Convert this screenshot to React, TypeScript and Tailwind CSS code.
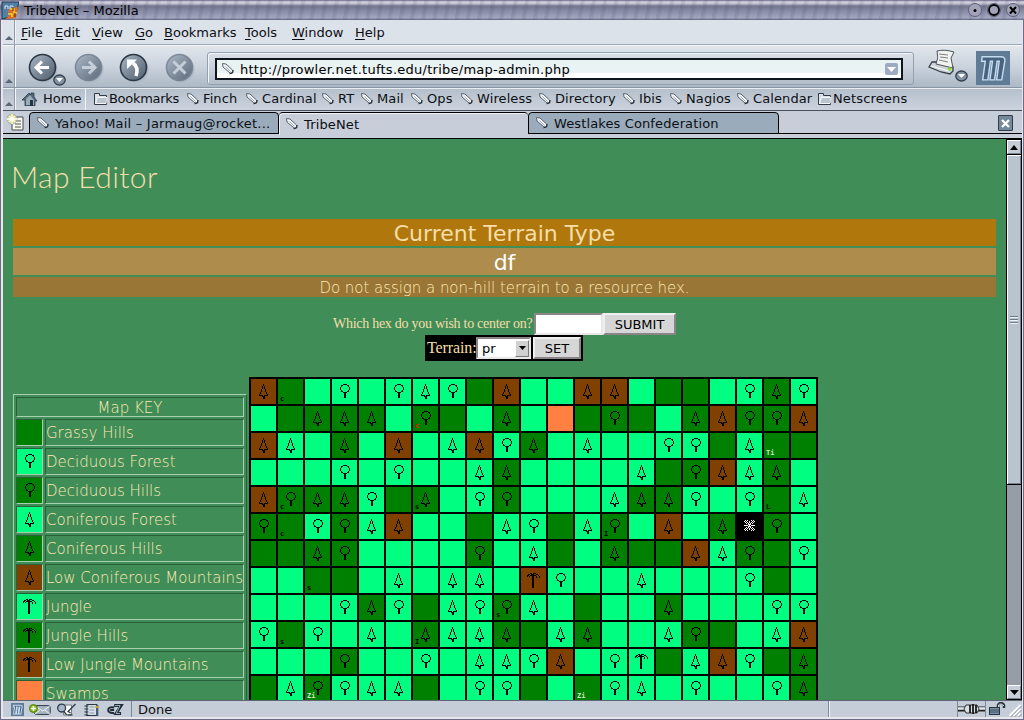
import React from "react";

const CONIFER = [
  "....#....",
  "....#....",
  "...#.#...",
  "...#.#...",
  "...#.#...",
  "..#...#..",
  "..#...#..",
  "..#...#..",
  ".#.....#.",
  ".#.....#.",
  "#.......#",
  "####.####",
  "...###...",
  "....##...",
  "....##...",
];
const ROUND = [
  "...####...",
  ".##....##.",
  ".#......#.",
  "#........#",
  "#........#",
  "#........#",
  ".#......#.",
  ".##....##.",
  "...####...",
  "....##....",
  "....##....",
  "....##....",
  "....##....",
  "....##....",
];
const PALM = [
  "...##.###....",
  ".##.###..##..",
  "##.######..#.",
  "#.#..##..#..#",
  ".....##..#..#",
  ".....##......",
  ".....##......",
  ".....##......",
  ".....##......",
  ".....##......",
  ".....##......",
  ".....##......",
  ".....##......",
  ".....##......",
  ".....##......",
];
const STAR = [
  ".#.#...#.#.",
  "#.#..#..#.#",
  ".#.#.#.#.#.",
  "..#.#.#.#..",
  "....###....",
  "####.#.####",
  "....###....",
  "..#.#.#.#..",
  ".#.#.#.#.#.",
  "#.#..#..#.#",
  ".#.#...#.#.",
];

function Pixels({ art, x, y, color = "#000" }: { art: string[]; x: number; y: number; color?: string }) {
  const d = art
    .map((row, j) => [...row].map((c, i) => (c === "#" ? `M${x + i} ${y + j}h1v1h-1z` : "")).join(""))
    .join("");
  return (
    <svg width="25" height="25" viewBox="0 0 25 25" shapeRendering="crispEdges" className="block">
      <path d={d} fill={color} />
    </svg>
  );
}

const BG: Record<string, string> = {
  h: "bg-[#008000]", p: "bg-[#00ff80]", f: "bg-[#00ff80]", d: "bg-[#008000]",
  c: "bg-[#00ff80]", C: "bg-[#008000]", m: "bg-[#804000]", j: "bg-[#00ff80]",
  k: "bg-[#008000]", J: "bg-[#804000]", s: "bg-[#ff8040]", o: "bg-black",
};

function Glyph({ t }: { t: string }) {
  if ("cCm".includes(t)) return <Pixels art={CONIFER} x={8} y={5} />;
  if ("fd".includes(t)) return <Pixels art={ROUND} x={8} y={5} />;
  if ("jkJ".includes(t)) return <Pixels art={PALM} x={6} y={5} />;
  if (t === "o") return <Pixels art={STAR} x={7} y={6} color="#fff" />;
  return null;
}

const ROWS = [
  "mhpfpfcfhmppmmphhpfCf",
  "phCCCpdhpCpshdhpCmddm",
  "mcpCpmpcmfCpcppffhchh",
  "pppfpfppcCppppchdmcCp",
  "mdCCfhCpfdpppcCCfpfhc",
  "dhfdcmpphcfhcdpmpCodp",
  "hhCdppppdpchpChhmcdhf",
  "pphhpcpccpJfppcpppfhp",
  "pppfCfhcfdcphppCpppff",
  "fhfpcpCccChcCppcdhpcm",
  "pppdppfpccfmpfjhcmfhC",
  "hcdfcchpffhphfcpfppfC",
];

const MARKS: Record<string, [string, string]> = {
  "0,1": ["c", "text-black"], "1,6": ["c", "text-[#ff0000]"], "2,19": ["Ti", "text-[#d0e8d0]"],
  "4,1": ["c", "text-black"], "4,6": ["s", "text-black"], "4,19": ["L", "text-black"],
  "5,1": ["c", "text-black"], "5,13": ["I", "text-black"], "7,2": ["s", "text-black"],
  "8,9": ["s", "text-black"], "9,1": ["s", "text-black"], "9,6": ["I", "text-black"],
  "11,2": ["Zi", "text-[#d0e8d0]"], "11,12": ["Zi", "text-[#d0e8d0]"],
};

function HexMap() {
  return (
    <div className="grid grid-cols-[repeat(21,25px)] auto-rows-[25px] gap-[2px] bg-black p-[2px] w-[569px]">
      {ROWS.flatMap((row, r) =>
        [...row].map((t, c) => {
          const m = MARKS[`${r},${c}`];
          return (
            <div key={`${r}-${c}`} className={`relative w-[25px] h-[25px] ${BG[t]}`}>
              <Glyph t={t} />
              {m && (
                <span className={`absolute left-[2px] bottom-px text-[7px] leading-[7px] font-bold font-['DejaVu_Sans_Mono',monospace] ${m[1]}`}>{m[0]}</span>
              )}
            </div>
          );
        })
      )}
    </div>
  );
}

const KEY: [string, string][] = [
  ["h", "Grassy Hills"], ["f", "Deciduous Forest"], ["d", "Deciduous Hills"], ["c", "Coniferous Forest"],
  ["C", "Coniferous Hills"], ["m", "Low Coniferous Mountains"], ["j", "Jungle"], ["k", "Jungle Hills"],
  ["J", "Low Jungle Mountains"], ["s", "Swamps"],
];

const INSET = "border border-t-[#28603a] border-l-[#28603a] border-r-[#a8d0b0] border-b-[#a8d0b0]";

function MapKey() {
  return (
    <div className="w-[234px] border border-t-[#a8d0b0] border-l-[#a8d0b0] border-r-[#28603a] border-b-[#28603a] p-[2px] flex flex-col gap-[2px] text-[15px] font-extralight text-[#ffe9b4] whitespace-nowrap">
      <div className={`h-[20px] w-[228px] text-center leading-[21px] ${INSET}`}>Map KEY</div>
      {KEY.map(([t, label]) => (
        <div key={label} className="flex gap-[2px]">
          <div className={`w-[27px] h-[27px] shrink-0 ${INSET} ${BG[t]}`}><Glyph t={t} /></div>
          <div className={`w-[199px] h-[27px] leading-[26px] ${INSET}`}>{label}</div>
        </div>
      ))}
    </div>
  );
}

function Tag() {
  return (
    <svg width="14" height="14" viewBox="0 0 14 14" className="shrink-0">
      <path d="M1.500 1.500L5 2 11.500 8 11.500 10.500 9 11 2 5z" fill="#f1f4f7" stroke="#59636f" />
      <path d="M4.500 4.500l5 5" fill="none" stroke="#a4adb6" />
      <path d="M8.500 11.800l3.200-.8.500-3" fill="none" stroke="#1c222a" />
    </svg>
  );
}

function Folder() {
  return (
    <svg width="15" height="14" viewBox="0 0 15 14" className="shrink-0">
      <path d="M1.500 12.500v-11h5v2h7v9z" fill="#dce2e8" stroke="#333c46" />
      <path d="M2.500 11.500l2-6h9.500l-1 6z" fill="#b9c4ce" stroke="#fff" strokeWidth=".8" />
    </svg>
  );
}

function Round({ children, dim }: { children: React.ReactNode; dim?: boolean }) {
  return (
    <svg width="30" height="30" viewBox="0 0 30 30" className="block shrink-0">
      <defs>
        <linearGradient id="ball" x1="0" y1="0" x2="1" y2="1">
          <stop offset="0" stopColor="#aab7c5" /><stop offset="1" stopColor="#4d5b6c" />
        </linearGradient>
      </defs>
      <circle cx="16" cy="16" r="13.5" fill="#a5b1bf" opacity=".6" />
      <circle cx="14.5" cy="14.5" r="13" fill="url(#ball)" stroke={dim ? "#6f7c8b" : "#2c3744"} strokeWidth="1.6" opacity={dim ? 0.85 : 1} />
      {children}
    </svg>
  );
}

function Drop() {
  return (
    <svg width="13" height="12" viewBox="0 0 13 12" className="block">
      <ellipse cx="6.5" cy="6" rx="5.7" ry="5" fill="#8391a1" stroke="#333f4c" strokeWidth="1.3" />
      <path d="M3 4h7L6.5 8z" fill="#fff" />
    </svg>
  );
}

function Grip() {
  return (
    <div className="w-[12px] shrink-0 border-r border-[#8f9ba9] flex items-end justify-center pb-[4px] shadow-[1px_0_0_#f3f6f9]">
      <svg width="8" height="4" viewBox="0 0 8 4"><path d="M0 4l4-4 4 4z" fill="#5c6875" /></svg>
    </div>
  );
}

const MENU: [string, string, string][] = [
  ["F", "ile", "w-[34px]"], ["E", "dit", "w-[37px]"], ["V", "iew", "w-[43px]"], ["G", "o", "w-[29px]"],
  ["B", "ookmarks", "w-[81px]"], ["T", "ools", "w-[47px]"], ["W", "indow", "w-[63px]"], ["H", "elp", "w-[40px]"],
];

const LINKS: [string, string, boolean][] = [
  ["Bookmarks", "w-[93px]", true], ["Finch", "w-[59px]", false], ["Cardinal", "w-[76px]", false],
  ["RT", "w-[39px]", false], ["Mail", "w-[50px]", false], ["Ops", "w-[50px]", false],
  ["Wireless", "w-[78px]", false], ["Directory", "w-[84px]", false], ["Ibis", "w-[47px]", false],
  ["Nagios", "w-[67px]", false], ["Calendar", "w-[81px]", false], ["Netscreens", "w-[110px]", true],
];

function MozM({ size }: { size: number }) {
  return (
    <svg width={size} height={size} viewBox="0 0 33 33" className="block shrink-0">
      <rect width="33" height="33" fill="#607b96" />
      <path d="M6 5.500h18q4.500 0 4 4L25 28h-5l2.500-18h-2L18 28h-4.500L16 10h-2l-2.500 18H6.500L9 10H5.500z" fill="#48637f" stroke="#c7dbef" strokeWidth={size < 20 ? 2.6 : 1.4} />
    </svg>
  );
}

function TitleBar() {
  return (
    <div className="h-[20px] shrink-0 flex items-center bg-[repeating-linear-gradient(100deg,rgba(60,62,90,0.12)_0_3px,transparent_5px_11px),linear-gradient(#69698a_0,#d7d7e5_2px,#b8b8ca_4px,#73768c_6px,#888ca5_11px,#a2a6c0_18px,#60617b_20px)]">
      <svg width="18" height="18" viewBox="0 0 18 18" className="ml-[1px]">
        <path d="M1 1h17L14 15 1 18z" fill="#537fa5" stroke="#23374d" />
        <path d="M4 5v3M4 5h3v3M9 5h3v3H9z" stroke="#d7e8f5" fill="none" />
        <path d="M7 9l4-2 6-1-2 11-10 1 3-4z" fill="#db6d22" />
        <path d="M9 8h4v4h3M7 13h4v3" stroke="#f5d431" strokeWidth="1.500" fill="none" />
        <path d="M12 6v4M14 12v4" stroke="#582712" />
      </svg>
      <span className="ml-[5px] mt-[1px] text-[13px] text-black leading-[20px] tracking-[0.06px]">TribeNet – Mozilla</span>
      <svg width="56" height="18" viewBox="0 0 56 18" className="ml-auto">
        <g fill="#a1a3b8" stroke="#60627a"><circle cx="7" cy="9" r="6.500" /><circle cx="26" cy="9" r="6.500" /><circle cx="45" cy="9" r="6.500" /></g>
        <circle cx="7" cy="9.500" r="1.500" />
        <circle cx="26" cy="9" r="5" fill="none" stroke="#000" strokeWidth="1.800" />
        <path d="M42 6l6 6.500M48 6l-6 6.500" stroke="#000" strokeWidth="2" />
      </svg>
    </div>
  );
}

function Tab({ label, active, cls }: { label: string; active?: boolean; cls: string }) {
  return (
    <div className={`flex items-center pl-[6px] gap-[5px] border-t border-black rounded-t-[4px] whitespace-nowrap ${cls} ${active ? "bg-[#c8ced9] h-[23px] shadow-[inset_1px_1px_0_#edf1f5]" : "bg-[#9aabbb] h-[22px] border-b border-r border-l"}`}>
      <Tag /><span className="pt-px">{label}</span>
    </div>
  );
}

function ScrollBar() {
  const btn = "w-[14px] h-[14px] shrink-0 flex items-center justify-center border border-t-white border-l-white border-[#78838f] bg-[#c6cdd8]";
  return (
    <div className="w-[16px] shrink-0 bg-[#969da6] border border-black flex flex-col">
      <div className={btn}><svg width="8" height="5"><path d="M0 5l4-5 4 5z" /></svg></div>
      <div className="h-[331px] border-y border-y-black bg-[#bac4d0] shadow-[inset_1px_1px_0_#fff,inset_-1px_-1px_0_#78838f] flex items-center justify-center">
        <div className="w-[8px] h-[8px] bg-[repeating-linear-gradient(#6a7a8c_0_1px,#eef2f6_1px_2px,#bac4d0_2px_3px)]" />
      </div>
      <div className={`mt-auto border-t ${btn}`}><svg width="9" height="5"><path d="M0 0h9L4.500 5z" /></svg></div>
    </div>
  );
}

function StatusBar() {
  return (
    <div className="h-[17px] shrink-0 flex items-center bg-[#c5cdd8] border-t border-[#5d6774] text-[13px] text-[#111]">
      <div className="flex items-center w-[129px] h-full pl-[8px] pt-px border-r border-[#7d8996] shrink-0">
        <MozM size={13} />
        <svg width="108" height="14" viewBox="3 0 108 14">
          <rect x="13.500" y="2.500" width="16" height="9" rx="2" fill="#a5b4c1" stroke="#333f4b" /><path d="M14 3l8 5 7-5M14 11l5-4m10 4l-5-4" fill="none" stroke="#f0f4f8" />
          <circle cx="12.500" cy="5.500" r="4" fill="#87b819" stroke="#4f7c08" /><path d="M10 5.500h5M12.500 3v5" stroke="#fff" strokeWidth="1.500" />
          <path d="M43 2h8v10h-8z" fill="#fff" stroke="#6b7681" /><circle cx="41" cy="5" r="4" fill="#a7b7c9" stroke="#2e3a45" strokeWidth="1.300" /><path d="M43 8l3 4m1-3l8-8m-8 7l3 2m-3 2h5" stroke="#2e3a45" strokeWidth="1.300" />
          <rect x="66.500" y="1.500" width="10" height="11" fill="#d9e2ea" stroke="#26323d" /><path d="M64 3h4m-4 3h4m-4 3h4m-4 3h4" stroke="#26323d" /><path d="M69 4h5m-5 3h5m-5 3h5" stroke="#8798a8" /><path d="M77 2v11" stroke="#455b70" strokeWidth="2" /><path d="M75 4h3" stroke="#d5a32a" strokeWidth="2" />
          <path d="M94 4.500q-6-1-6 2.500t6 3M90 7h4" fill="none" stroke="#1f2a35" strokeWidth="2" /><path d="M94 2.500h7l-5 8h5" fill="none" stroke="#1f2a35" strokeWidth="3" /><path d="M95 2.500h5l-4 8h4" fill="none" stroke="#9eb2c5" />
        </svg>
      </div>
      <span className="pl-[6px] leading-[16px] pt-px">Done</span>
      <div className="ml-auto flex items-center h-full">
        <div className="w-[129px] h-full border-l border-[#7d8996] shadow-[inset_1px_0_0_#eef2f6]" />
        <div className="w-[28px] h-full border-l border-[#7d8996] flex items-center">
          <svg width="27" height="12" viewBox="0 0 27 12">
            <path d="M0 6h27" stroke="#222" strokeWidth="5" /><path d="M0 5.500h27" stroke="#e3e8ec" strokeWidth="2.500" />
            <path d="M8 2h11l2 4-2 4H8L6 6z" fill="#dbe0e4" stroke="#333" /><path d="M12 2v8M15 1v10M18 2v8" stroke="#101010" strokeWidth="1.700" />
          </svg>
        </div>
        <div className="w-[21px] h-full border-l border-[#7d8996] flex items-center pl-[3px]">
          <svg width="17" height="14" viewBox="0 0 17 14"><path d="M9 6V3q1-2 3-2t3 2v3" fill="none" stroke="#29343f" strokeWidth="2.500" /><path d="M9.500 5V3q1-1 2.500-1t3 2" fill="none" stroke="#c9d3de" /><rect x=".5" y="5.500" width="10" height="7" fill="#7890a5" stroke="#29343f" /><path d="M1 8h9M1 10h9" stroke="#3f5162" /></svg>
        </div>
        <svg width="16" height="16" viewBox="0 0 15 16"><path d="M3 15L14 4M7 15l7-7M11 15l3-3" stroke="#fff" strokeWidth="2" /><path d="M4 16L15 5M8 16l7-7M12 16l3-3" stroke="#8995a2" /></svg>
      </div>
    </div>
  );
}

export default function App() {
  return (
    <div className="w-[1024px] h-[720px] overflow-hidden flex flex-col bg-[#e8e6ea] font-['DejaVu_Sans',sans-serif] text-[13px] text-[#0c0f14] border-b border-[#6a6c86]">
      <TitleBar />
      <div className="flex-1 min-h-0 flex flex-col border-l border-r border-[#6a6c86] pl-[2px] pr-[1px] pb-[2px]">
        <div className="h-[25px] shrink-0 flex bg-[#dce2ea] border-b border-[#9aa7b5]">
          <Grip />
          <div className="flex items-center pl-[6px] pt-[2px]">
            {MENU.map(([u, rest, w]) => (
              <span key={u} className={`${w} whitespace-nowrap`}><span className="underline underline-offset-2">{u}</span>{rest}</span>
            ))}
          </div>
        </div>

        <div className="h-[43px] shrink-0 flex bg-[linear-gradient(#e2e7ed,#cbd3dd_50%,#adb9c6)] border-b border-[#8995a3] shadow-[inset_0_1px_0_#f6f8fa]">
          <Grip />
          <div className="flex items-start pt-[8px] pl-[13px] w-[200px] shrink-0">
            <div className="relative w-[46px]">
              <Round><path d="M21 14.500H9M14 8.500l-6 6 6 6" fill="none" stroke="#fff" strokeWidth="3" /></Round>
              <div className="absolute left-[25px] top-[21px]"><Drop /></div>
            </div>
            <div className="w-[45px]"><Round dim><path d="M8 14.500h12M15 8.500l6 6-6 6" fill="none" stroke="#c5ced8" strokeWidth="3" /></Round></div>
            <div className="w-[46px]"><Round><path d="M17 23q3-9-3-13" fill="none" stroke="#fff" strokeWidth="3.500" /><path d="M8 6.500h10L8 16z" fill="#fff" /></Round></div>
            <Round dim><path d="M8.500 8.500l12 12M20.500 8.500l-12 12" stroke="#c5ced8" strokeWidth="3" /></Round>
          </div>
          <div className="mt-[7px] w-[707px] h-[33px] shrink-0 -ml-[8px] rounded-[3px] border border-[#93a0af] shadow-[inset_1px_1px_0_#f2f5f8] pl-[7px] pt-[5px]">
            <div className="w-[688px] h-[22px] border-2 border-[#10161d] bg-[linear-gradient(#e9f3f4_75%,#fff_75%)] flex items-center pl-[4px] pr-[3px]">
              <Tag />
              <span className="ml-[5px] mt-px text-black tracking-[0.26px]">http://prowler.net.tufts.edu/tribe/map-admin.php</span>
              <div className="ml-auto w-[13px] h-[12px] bg-[#9cabc0] rounded-[2px] flex items-center justify-center"><svg width="9" height="5"><path d="M0 0h9L4.500 5z" fill="#fff" /></svg></div>
            </div>
          </div>
          <div className="flex items-start pl-[13px] pt-[4px]">
            <svg width="31" height="28" viewBox="0 0 31 28">
              <path d="M5 13L2 18l12 5 9 2 3-3v-4L9 13z" fill="#cbd1d7" stroke="#353e48" strokeWidth="1.300" />
              <path d="M10 2q7-2 17 1l-3 6 2 10-17-4q3-6 1-13z" fill="#f2f2ef" stroke="#4c545d" />
              <path d="M12 5l9 1M13 8l8 1M12 11l9 2" stroke="#777f87" /><path d="M4 17l18 5" fill="none" stroke="#fff" /><circle cx="22.500" cy="20" r="1.800" fill="#8dd829" />
            </svg>
            <div className="mt-[21px] -ml-[3px]"><Drop /></div>
          </div>
          <div className="ml-[8px] mt-[6px]"><MozM size={34} /></div>
        </div>

        <div className="h-[23px] shrink-0 flex bg-[linear-gradient(#b4bfcb,#ccd3dd)] border-b border-[#48515e] shadow-[inset_0_1px_0_#e8edf2]">
          <Grip />
          <div className="flex items-center w-[71px] pl-[7px] gap-[5px] border-r border-[#f0f3f7] shrink-0">
            <svg width="16" height="14" viewBox="0 0 16 14" className="shrink-0"><path d="M0 8l7-7 2 2V1h3v4l3 4h-2v5H3V8z" fill="#516878" stroke="#303e4a" strokeWidth=".8" /><path d="M4 7l4-4 4 5v5H4z" fill="#9badb9" /><path d="M8 8h3v6H8z" fill="#223543" /></svg>
            <span>Home</span>
          </div>
          <div className="flex items-center pl-[7px]">
            {LINKS.map(([t, w, folder]) => (
              <div key={t} className={`flex items-center shrink-0 whitespace-nowrap ${w} ${folder ? "gap-[1px]" : "gap-[3px] tracking-[0.1px]"}`}>
                {folder ? <Folder /> : <Tag />}<span className={t === "Bookmarks" ? "tracking-[-0.3px]" : t === "Netscreens" ? "tracking-[0.15px]" : ""}>{t}</span>
              </div>
            ))}
          </div>
        </div>

        <div className="h-[28px] shrink-0 flex items-start pt-[1px] bg-[linear-gradient(#c8ced9_22px,#000_22px,#000_23px,#c8ced9_23px)] border-b border-black">
          <div className="w-[26px] pl-[4px] pt-[2px] shrink-0">
            <svg width="17" height="17" viewBox="0 0 17 17"><path d="M5 3h11v13H5z" fill="#f8f8ec" stroke="#424b55" /><path d="M8 7h6M8 10h6M8 13h6" stroke="#555" /><circle cx="5" cy="5" r="5" fill="#d8d675" stroke="#7e93ad" strokeWidth=".6" /><path d="M5 0v10M0 5h10M2 2l6 6M8 2L2 8" stroke="#fff" strokeWidth="1.300" /></svg>
          </div>
          <Tab label="Yahoo! Mail – Jarmaug@rocket..." cls="w-[250px] tracking-[0.22px]" />
          <Tab label="TribeNet" active cls="w-[249px] tracking-[0.15px]" />
          <Tab label="Westlakes Confederation" cls="w-[251px] tracking-[0.12px]" />
          <div className="ml-auto mr-[9px] mt-[3px] w-[15px] h-[16px] bg-[#73889a] border border-[#303c48] rounded-[1px] flex items-center justify-center">
            <svg width="9" height="9"><path d="M1 1l7 7M8 1L1 8" stroke="#fff" strokeWidth="2.300" /></svg>
          </div>
        </div>

        <div className="flex-1 min-h-0 flex overflow-hidden bg-[#408d58]">
          <div className="w-[1003px] shrink-0 overflow-hidden pl-[10px] pr-[10px] text-[#f5deaa]">
            <h1 className="mt-[19px] h-[61px] text-[30px] leading-[37px] -ml-[2px] font-light font-['Lato',sans-serif] tracking-[0.35px] whitespace-nowrap">Map Editor</h1>
            <div className="flex flex-col gap-[2px] text-center">
              <div className="h-[27px] bg-[#b0780c] text-[22px] leading-[29px]">Current Terrain Type</div>
              <div className="h-[27px] bg-[#ae8c4c] text-[22px] leading-[29px] text-white">df</div>
              <div className="h-[20px] bg-[#997536] text-[15px] leading-[22px] tracking-[-0.04px] font-extralight text-[#ffe9b4]">Do not assign a non-hill terrain to a resource hex.</div>
            </div>
            <div className="mt-[16px] flex justify-center font-['Liberation_Serif',serif] text-[14px] h-[22px]">
              <span className="w-[201px] leading-[22px] whitespace-nowrap tracking-[-0.27px]">Which hex do you wish to center on?</span>
              <div className="w-[69px] h-[22px] bg-white border-2 border-t-[#8b8589] border-l-[#8b8589] border-r-[#e8e8e8] border-b-[#e8e8e8]" />
              <button className="w-[73px] h-[22px] bg-[#d6d6d6] border-2 border-t-[#efefef] border-l-[#efefef] border-r-[#8b8589] border-b-[#8b8589] text-black text-[13px] leading-[19px] font-['DejaVu_Sans',sans-serif]">SUBMIT</button>
            </div>
            <div className="ml-[412px] flex w-[158px] h-[26px] bg-black p-[2px] font-['Liberation_Serif',serif] text-[16px]">
              <span className="w-[49px] leading-[22px] whitespace-nowrap tracking-[-0.1px]">Terrain:</span>
              <div className="w-[55px] h-[22px] bg-white border-2 border-t-[#8b8589] border-l-[#8b8589] border-r-[#e8e8e8] border-b-[#e8e8e8] flex items-center justify-between pl-[4px] font-['DejaVu_Sans',sans-serif] text-[13px] text-black">
                <span className="pt-px">pr</span>
                <div className="w-[14px] h-[17px] bg-[#d0d0d0] border border-t-white border-l-white border-[#777] flex items-center justify-center"><svg width="7" height="4"><path d="M0 0h7L3.500 4z" /></svg></div>
              </div>
              <button className="ml-[2px] w-[48px] h-[22px] bg-[#d6d6d6] border-2 border-t-[#efefef] border-l-[#efefef] border-r-[#8b8589] border-b-[#8b8589] text-black text-[13px] leading-[19px] font-['DejaVu_Sans',sans-serif]">SET</button>
            </div>
            <div className="mt-[16px] flex items-start gap-[2px]">
              <div className="pt-[17px] shrink-0"><MapKey /></div>
              <HexMap />
            </div>
          </div>
          <ScrollBar />
        </div>
        <StatusBar />
      </div>
    </div>
  );
}
